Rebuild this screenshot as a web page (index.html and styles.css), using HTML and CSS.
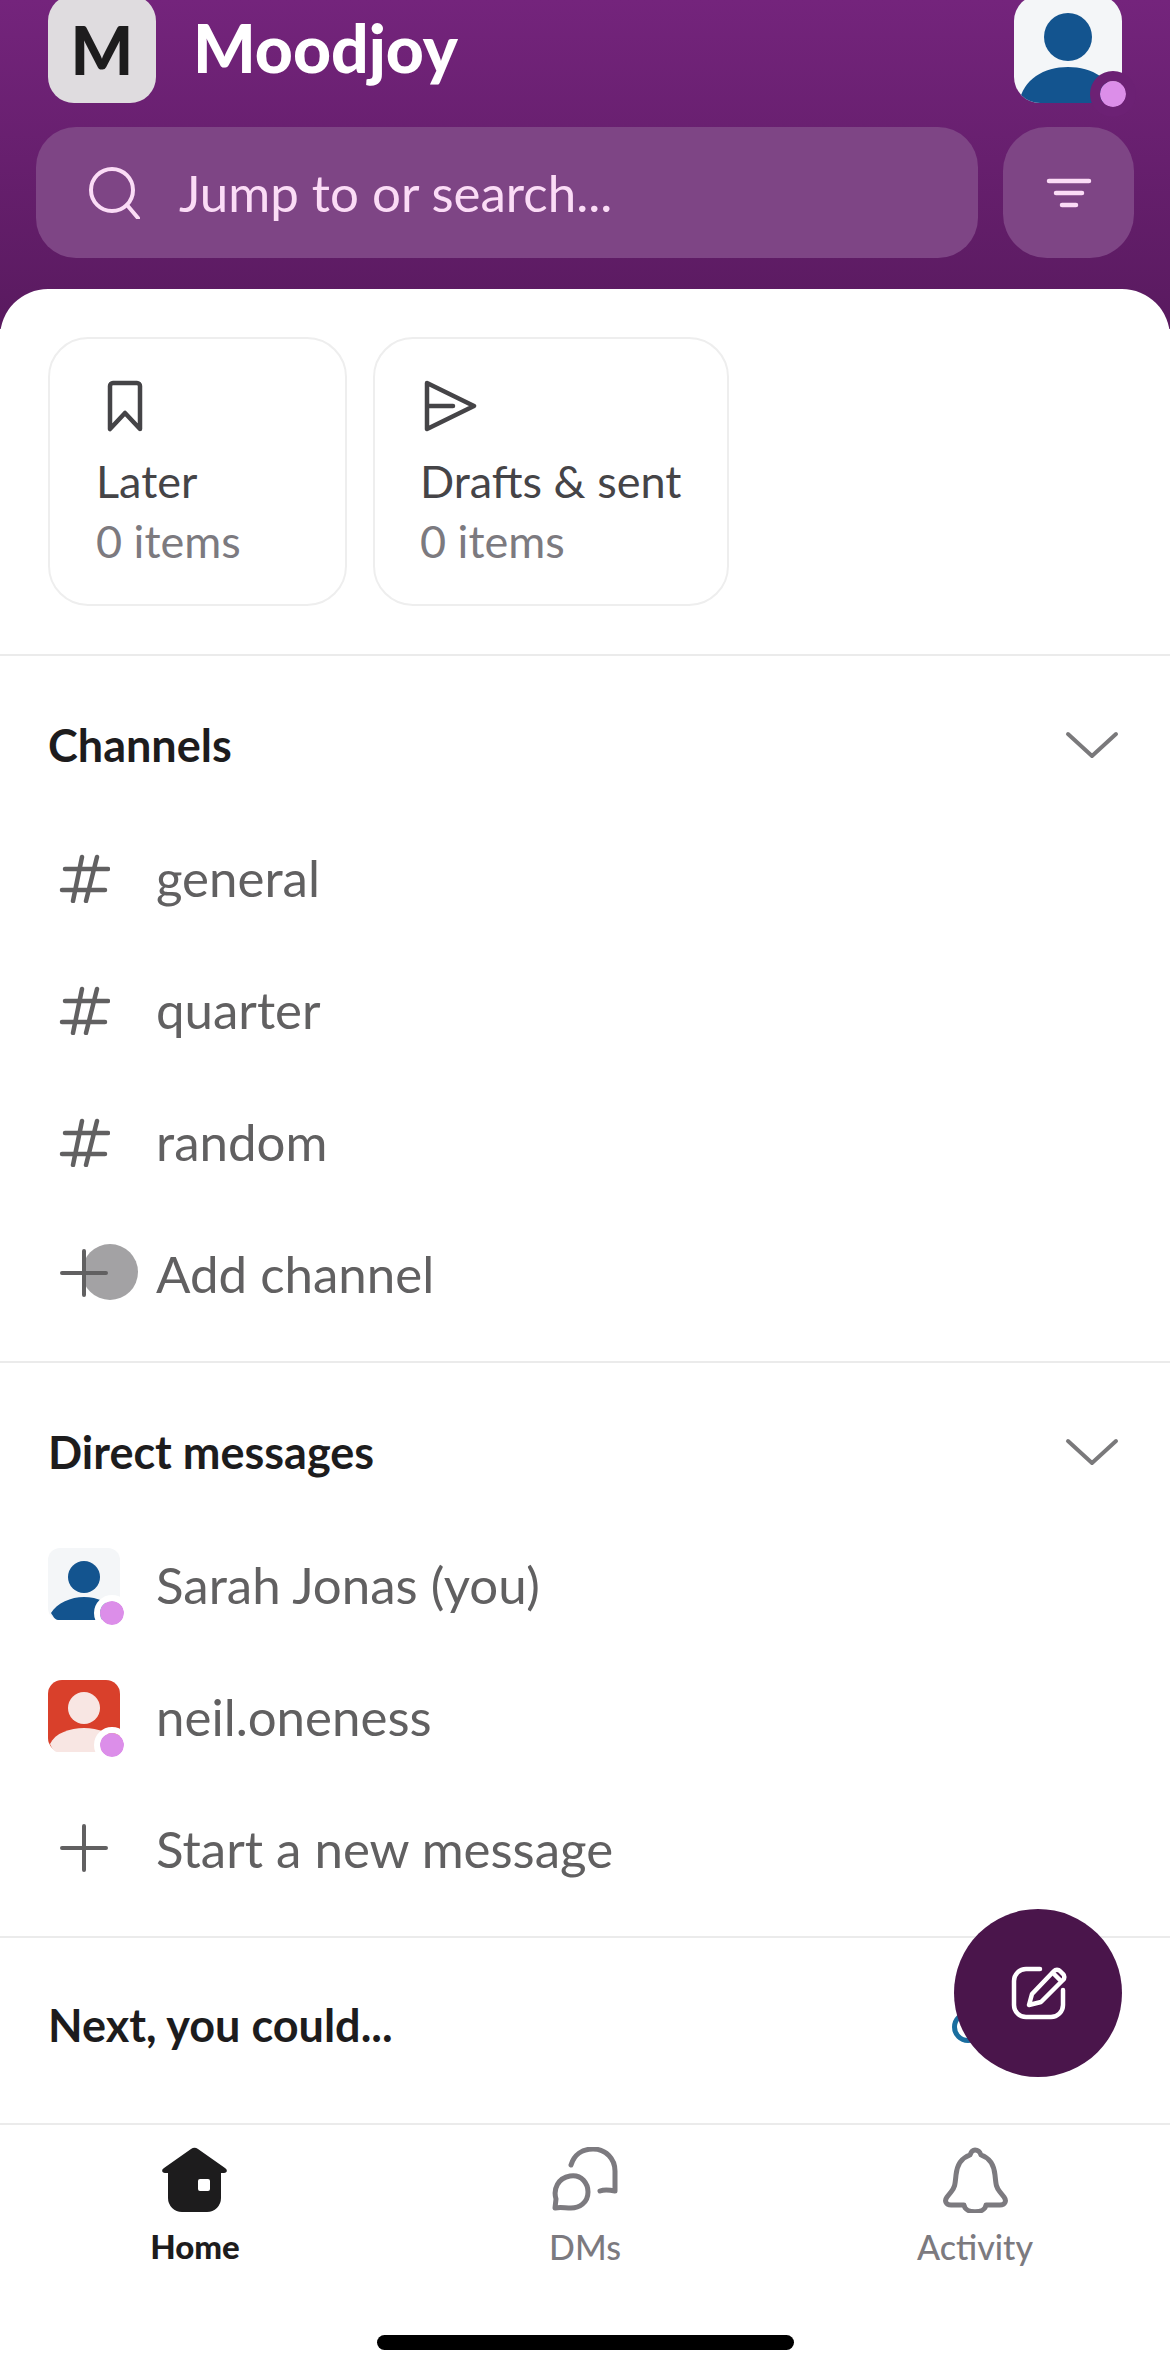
FILE: index.html
```html
<!DOCTYPE html>
<html lang="en">
<head>
<meta charset="utf-8">
<title>Moodjoy</title>
<link rel="stylesheet" href="styles.css">
</head>
<body>
<div class="app">
  <header class="top">
    <div class="brand">
      <div class="logo">M</div>
      <div class="workspace">Moodjoy</div>
      <div class="me">
        <svg class="me-pic" viewBox="0 0 108 108"><rect width="108" height="108" fill="#f4f6f8"/><circle cx="54" cy="42" r="24" fill="#13548f"/><path d="M5 108c4-24 25-36 49-36s45 12 49 36z" fill="#13548f"/></svg>
        <span class="dot dot-big"></span>
      </div>
    </div>
    <div class="searchrow">
      <div class="search">
        <svg class="search-ico" viewBox="0 0 52 52" fill="none" stroke="#fbdcf6" stroke-width="4" stroke-linecap="round"><circle cx="24" cy="23" r="21"/><path d="M39 38l11 13"/></svg>
        <span class="search-text">Jump to or search...</span>
      </div>
      <div class="filter">
        <svg class="filter-ico" viewBox="0 0 46 30" fill="none" stroke="#fbdcf6" stroke-width="4.5" stroke-linecap="round"><path d="M3 3h40M10 15h26M16 27h14"/></svg>
      </div>
    </div>
  </header>

  <main class="sheet">
    <section class="cards">
      <div class="card card-later">
        <svg class="card-ico ico-mark" viewBox="0 0 40 52" fill="none" stroke="#454447" stroke-width="4.5" stroke-linejoin="round"><path d="M5 6a3 3 0 0 1 3-3h24a3 3 0 0 1 3 3v43L20 33 5 49z"/></svg>
        <div class="card-title">Later</div>
        <div class="card-sub">0 items</div>
      </div>
      <div class="card card-drafts">
        <svg class="card-ico ico-send" viewBox="0 0 54 52" fill="none" stroke="#454447" stroke-width="4.5" stroke-linejoin="round" stroke-linecap="round"><path d="M3 3l47 23L3 49zM3 26h26"/></svg>
        <div class="card-title">Drafts &amp; sent</div>
        <div class="card-sub">0 items</div>
      </div>
    </section>

    <section class="group">
      <div class="group-head">
        <h2>Channels</h2>
        <svg class="chev" viewBox="0 0 54 28" fill="none" stroke="#7a797b" stroke-width="4" stroke-linecap="round" stroke-linejoin="round"><path d="M3 3l24 22L51 3"/></svg>
      </div>
      <div class="row">
        <svg class="row-ico" viewBox="0 0 52 52" fill="none" stroke="#616061" stroke-width="4.5" stroke-linecap="round"><path d="M24 6l-9 44M39 6l-11 44M7 18h43M4 39h43"/></svg>
        <span>general</span>
      </div>
      <div class="row">
        <svg class="row-ico" viewBox="0 0 52 52" fill="none" stroke="#616061" stroke-width="4.5" stroke-linecap="round"><path d="M24 6l-9 44M39 6l-11 44M7 18h43M4 39h43"/></svg>
        <span>quarter</span>
      </div>
      <div class="row">
        <svg class="row-ico" viewBox="0 0 52 52" fill="none" stroke="#616061" stroke-width="4.5" stroke-linecap="round"><path d="M24 6l-9 44M39 6l-11 44M7 18h43M4 39h43"/></svg>
        <span>random</span>
      </div>
      <div class="row">
        <span class="touch"></span>
        <svg class="row-ico plus" viewBox="0 0 52 52" fill="none" stroke="#616061" stroke-width="4" stroke-linecap="round"><path d="M26 4v44M4 26h44"/></svg>
        <span>Add channel</span>
      </div>
    </section>

    <section class="group">
      <div class="group-head">
        <h2>Direct messages</h2>
        <svg class="chev" viewBox="0 0 54 28" fill="none" stroke="#7a797b" stroke-width="4" stroke-linecap="round" stroke-linejoin="round"><path d="M3 3l24 22L51 3"/></svg>
      </div>
      <div class="row">
        <div class="avatar">
          <svg viewBox="0 0 72 72"><rect width="72" height="72" rx="12" fill="#f4f6f8"/><circle cx="36" cy="29" r="16" fill="#13548f"/><path d="M3 65c6-10 20-16 33-16s28 6 33 16v7H10c-3 0-5-4-7-7z" fill="#13548f"/></svg>
          <span class="dot dot-small"></span>
        </div>
        <span>Sarah Jonas (you)</span>
      </div>
      <div class="row">
        <div class="avatar">
          <svg viewBox="0 0 72 72"><rect width="72" height="72" rx="14" fill="#d9402b"/><circle cx="36" cy="28" r="16" fill="#f8e6e3"/><path d="M2 64c5-11 20-16 34-16s29 5 34 16v8H9c-3 0-5-4-7-8z" fill="#f8e6e3"/></svg>
          <span class="dot dot-small"></span>
        </div>
        <span>neil.oneness</span>
      </div>
      <div class="row">
        <svg class="row-ico plus" viewBox="0 0 52 52" fill="none" stroke="#616061" stroke-width="4" stroke-linecap="round"><path d="M26 4v44M4 26h44"/></svg>
        <span>Start a new message</span>
      </div>
    </section>

    <section class="group group-next">
      <div class="group-head head-next">
        <h2>Next, you could...</h2>
        <span class="ring"></span>
      </div>
    </section>
  </main>

  <button class="fab" type="button" aria-label="Compose">
    <svg viewBox="0 0 60 60" fill="none" stroke="#fff" stroke-width="4.5" stroke-linecap="round" stroke-linejoin="round"><path d="M32 6H18A12 12 0 0 0 6 18v24a12 12 0 0 0 12 12h25a12 12 0 0 0 12-12V27"/><path d="M21 42l3-11L46 8a4 4 0 0 1 6 0l3 3a4 4 0 0 1 0 6L33 39z"/><path d="M45 10l7 7"/></svg>
  </button>

  <nav class="tabs">
    <div class="tab tab-on">
      <svg class="tab-ico" viewBox="0 0 66 66"><path fill="#1d1c1d" fill-rule="evenodd" d="M29 2a6 6 0 0 1 7 0l27 19c3 2 2 5-1 5h-3v25a14 14 0 0 1-14 14H20A14 14 0 0 1 6 51V26H3c-3 0-4-3-1-5zM38 32a2 2 0 0 0-2 2v8a2 2 0 0 0 2 2h8a2 2 0 0 0 2-2v-8a2 2 0 0 0-2-2z"/></svg>
      <span>Home</span>
    </div>
    <div class="tab">
      <svg class="tab-ico" viewBox="0 0 66 66" fill="none" stroke="#7c7a7f" stroke-width="5" stroke-linecap="round" stroke-linejoin="round"><path d="M19 18C22 8 30 2 41 2c13 0 22 10 22 22v20c-5-1-10-2-15 0"/><path d="M3 61l1-9C1 42 6 31 18 29c12-2 18 8 18 16 0 11-9 16-17 16-6 0-11-1-16 0z"/></svg>
      <span>DMs</span>
    </div>
    <div class="tab">
      <svg class="tab-ico" viewBox="0 0 66 66" fill="none" stroke="#7c7a7f" stroke-width="5" stroke-linecap="round" stroke-linejoin="round"><path d="M33 3c3 0 5 2 6 5 9 3 13 10 14 20 1 10 1 12 5 17l4 5c3 4 1 8-4 8H44c-1 9-21 9-22 0H9c-5 0-7-4-4-8l4-5c4-5 4-7 5-17 1-10 5-17 14-20 1-3 3-5 5-5z"/></svg>
      <span>Activity</span>
    </div>
  </nav>
  <div class="home-bar"></div>
</div>
</body>
</html>
```
FILE: styles.css
```css
* { box-sizing: border-box; }
html, body { margin: 0; padding: 0; background: #fff; }
body { font-family: Lato, "Open Sans", sans-serif; color: #1d1c1d; }
.app { position: relative; width: 1170px; height: 2374px; overflow: hidden; background: #fff; display: flex; flex-direction: column; }

.top { height: 329px; flex: none; padding: 0 36px; background: linear-gradient(180deg, #74247c 0%, #591a5f 100%); }
.brand { height: 127px; display: flex; align-items: flex-start; padding: 0 0 0 12px; }
.logo { width: 108px; height: 108px; margin-top: -5px; border-radius: 26px; background: #dfdcdf; color: #1d1c1d; font-weight: 900; font-size: 66px; display: flex; align-items: center; justify-content: center; flex: none; }
.workspace { margin: 6px 0 0 37px; color: #fff; font-weight: 900; font-size: 66px; line-height: 84px; flex: 1; }
.me { position: relative; width: 108px; height: 108px; margin-top: -5px; flex: none; margin-right: 12px; }
.me-pic { display: block; width: 108px; height: 108px; border-radius: 26px; }
.dot { position: absolute; border-radius: 50%; background: #dc8ee9; background-clip: padding-box; }
.dot-big { right: -14px; bottom: -14px; width: 46px; height: 46px; border: 10px solid #6c2174; }
.searchrow { display: flex; gap: 25px; height: 131px; }
.search { flex: 1; display: flex; align-items: center; background: #7e4585; border-radius: 40px; padding-left: 52px; }
.search-ico { width: 52px; height: 52px; flex: none; }
.search-text { margin-left: 39px; font-size: 51px; color: #fbdcf6; }
.filter { width: 131px; display: flex; align-items: center; justify-content: center; background: #7e4585; border-radius: 44px; }
.filter-ico { width: 46px; height: 30px; }

.sheet { position: relative; margin-top: -40px; flex: 1; background: #fff; border-radius: 48px 48px 0 0; display: flex; flex-direction: column; }
.cards { display: flex; gap: 26px; padding: 48px 48px 0; border-bottom: 2px solid #ebebeb; height: 367px; flex: none; }
.card { height: 269px; border: 2px solid #eeeeee; border-radius: 40px; padding: 41px 30px 0 46px; }
.card-later { width: 299px; }
.card-drafts { width: 356px; padding-left: 45px; }
.card-ico { display: block; height: 52px; }
.ico-mark { width: 40px; margin-left: 9px; }
.ico-send { width: 54px; margin-left: 4px; }
.card-title { margin-top: 19px; font-size: 45px; line-height: 60px; color: #454447; }
.card-sub { font-size: 45px; line-height: 60px; color: #7c7a7f; }

.group { padding: 0 48px 22px; border-bottom: 2px solid #ebebeb; flex: none; }
.group-head { height: 155px; padding: 22px 3px 0 0; display: flex; align-items: center; justify-content: space-between; }
.group-head h2 { margin: 0; font-size: 45px; font-weight: 700; color: #1d1c1d; }
.chev { width: 54px; height: 28px; }
.row { position: relative; height: 132px; display: flex; align-items: center; font-size: 51px; color: #616061; }
.row-ico { width: 52px; height: 52px; margin: 0 46px 0 10px; flex: none; }
.avatar { position: relative; width: 72px; height: 72px; margin-right: 36px; flex: none; }
.avatar svg { display: block; width: 72px; height: 72px; }
.dot-small { right: -10px; bottom: -11px; width: 36px; height: 36px; border: 6px solid #fff; }
.touch { position: absolute; left: 34px; top: 37px; width: 56px; height: 56px; border-radius: 50%; background: #a3a2a4; }
.plus { position: relative; }
.group-next { border-bottom: none; padding-bottom: 0; }
.head-next { padding-right: 138px; }
.head-next h2 { margin-top: -3px; }
.ring { width: 32px; height: 32px; border: 5px solid #1a6e9f; border-radius: 50%; }

.fab { position: absolute; left: 954px; top: 1909px; width: 168px; height: 168px; border: none; border-radius: 50%; background: #4a154b; padding: 0; display: flex; align-items: center; justify-content: center; }
.fab svg { width: 60px; height: 60px; overflow: visible; }

.tabs { position: absolute; left: 0; right: 0; top: 2123px; height: 251px; background: #fff; border-top: 2px solid #ebebeb; display: grid; grid-template-columns: repeat(3, 1fr); }
.tab { display: flex; flex-direction: column; align-items: center; padding-top: 22px; font-size: 34px; font-weight: 500; color: #7c7a7f; }
.tab-on { color: #1d1c1d; font-weight: 900; font-size: 33px; }
.tab-ico { width: 66px; height: 66px; margin-bottom: 13px; flex: none; }
.home-bar { position: absolute; left: 377px; top: 2335px; width: 417px; height: 15px; border-radius: 8px; background: #000; }
```
